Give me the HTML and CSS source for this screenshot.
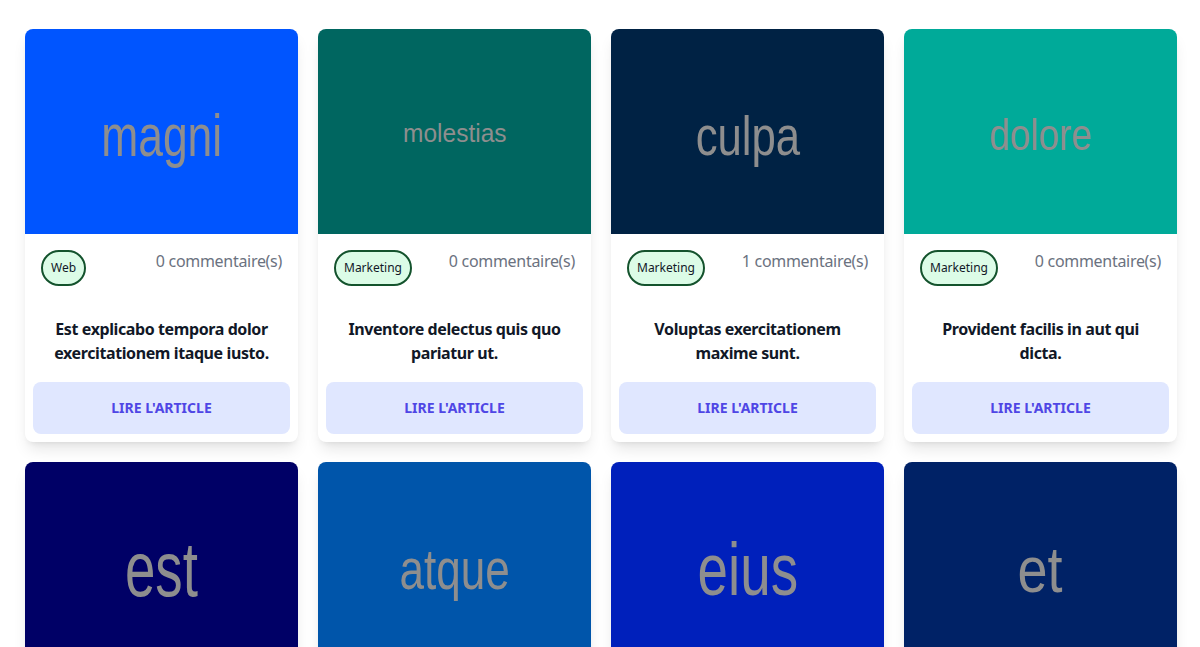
FILE: index.html
```html
<!DOCTYPE html>
<html lang="fr">
<head>
<meta charset="utf-8">
<title>Articles</title>
<link rel="stylesheet" href="styles.css">
</head>
<body>
<main class="grid">
  <article class="card">
    <div class="thumb" style="--bg:#0055ff;--fs:60px;--sx:.74"><span class="ph">magni</span></div>
    <div class="body">
      <div class="meta"><span class="badge">Web</span><span class="comments">0 commentaire(s)</span></div>
      <h2 class="title">Est explicabo tempora dolor exercitationem itaque iusto.</h2>
      <a class="btn" href="#">Lire l'article</a>
    </div>
  </article>
  <article class="card">
    <div class="thumb" style="--bg:#006660;--fs:25px;--sx:.98"><span class="ph">molestias</span></div>
    <div class="body">
      <div class="meta"><span class="badge">Marketing</span><span class="comments">0 commentaire(s)</span></div>
      <h2 class="title">Inventore delectus quis quo pariatur ut.</h2>
      <a class="btn" href="#">Lire l'article</a>
    </div>
  </article>
  <article class="card">
    <div class="thumb" style="--bg:#002244;--fs:56px;--sx:.78"><span class="ph">culpa</span></div>
    <div class="body">
      <div class="meta"><span class="badge">Marketing</span><span class="comments">1 commentaire(s)</span></div>
      <h2 class="title">Voluptas exercitationem maxime sunt.</h2>
      <a class="btn" href="#">Lire l'article</a>
    </div>
  </article>
  <article class="card">
    <div class="thumb" style="--bg:#00aa99;--fs:45px;--sx:.82"><span class="ph">dolore</span></div>
    <div class="body">
      <div class="meta"><span class="badge">Marketing</span><span class="comments">0 commentaire(s)</span></div>
      <h2 class="title">Provident facilis in aut qui dicta.</h2>
      <a class="btn" href="#">Lire l'article</a>
    </div>
  </article>
  <article class="card">
    <div class="thumb" style="--bg:#000066;--fs:77px;--sx:.71"><span class="ph">est</span></div>
    <div class="body">
      <div class="meta"><span class="badge">Web</span><span class="comments">0 commentaire(s)</span></div>
      <h2 class="title">Lorem ipsum dolor sit amet.</h2>
      <a class="btn" href="#">Lire l'article</a>
    </div>
  </article>
  <article class="card">
    <div class="thumb" style="--bg:#0055aa;--fs:58px;--sx:.76"><span class="ph">atque</span></div>
    <div class="body">
      <div class="meta"><span class="badge">Web</span><span class="comments">0 commentaire(s)</span></div>
      <h2 class="title">Lorem ipsum dolor sit amet.</h2>
      <a class="btn" href="#">Lire l'article</a>
    </div>
  </article>
  <article class="card">
    <div class="thumb" style="--bg:#0020bb;--fs:75px;--sx:.73"><span class="ph">eius</span></div>
    <div class="body">
      <div class="meta"><span class="badge">Web</span><span class="comments">0 commentaire(s)</span></div>
      <h2 class="title">Lorem ipsum dolor sit amet.</h2>
      <a class="btn" href="#">Lire l'article</a>
    </div>
  </article>
  <article class="card">
    <div class="thumb" style="--bg:#002266;--fs:65px;--sx:.83"><span class="ph">et</span></div>
    <div class="body">
      <div class="meta"><span class="badge">Web</span><span class="comments">0 commentaire(s)</span></div>
      <h2 class="title">Lorem ipsum dolor sit amet.</h2>
      <a class="btn" href="#">Lire l'article</a>
    </div>
  </article>
</main>
</body>
</html>
```

FILE: styles.css
```css
* { box-sizing: border-box; }
html, body { margin: 0; background: #ffffff; }
body {
  font-family: "Noto Sans", "Open Sans", sans-serif;
  color: #111827;
}
.grid {
  display: grid;
  grid-template-columns: repeat(4, 273px);
  column-gap: 20px;
  row-gap: 20px;
  padding: 29px 0 0 25px;
}
.card {
  background: #fff;
  border-radius: 8px;
  overflow: hidden;
  box-shadow: 0 10px 15px -3px rgba(0,0,0,.1), 0 4px 6px -4px rgba(0,0,0,.1);
}
.thumb {
  height: 205px;
  background: var(--bg);
  display: flex;
  align-items: center;
  justify-content: center;
}
.ph {
  display: inline-block;
  font-family: "Liberation Sans", Arial, sans-serif;
  font-size: var(--fs);
  line-height: 1;
  color: #8e8e8e;
  transform: translateY(0.07em) scaleX(var(--sx));
}
.body { padding: 8px; }
.meta {
  display: flex;
  justify-content: space-between;
  align-items: flex-start;
  padding: 8px 8px 0;
}
.badge {
  font-size: 12px;
  line-height: 16px;
  padding: 8px;
  border: 2px solid #14532d;
  background: #dcfce7;
  border-radius: 9999px;
  color: #111827;
}
.comments {
  font-size: 16px;
  line-height: 24px;
  color: #6b7280;
  letter-spacing: -0.3px;
  margin-top: -1px;
}
.title {
  margin: 31px 0 0;
  padding: 0 10px;
  font-size: 16px;
  line-height: 24px;
  font-weight: 700;
  letter-spacing: -0.4px;
  text-align: center;
  color: #111827;
}
.btn {
  display: block;
  margin-top: 17px;
  padding: 16px;
  background: #e0e7ff;
  color: #4f46e5;
  border-radius: 8px;
  text-align: center;
  text-decoration: none;
  text-transform: uppercase;
  font-size: 14px;
  line-height: 20px;
  font-weight: 700;
}
```
